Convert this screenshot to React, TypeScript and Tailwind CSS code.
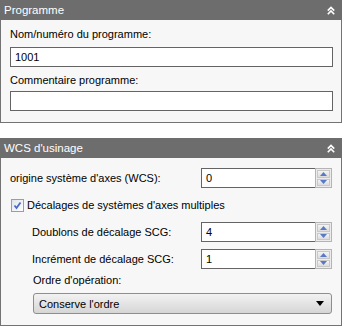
function Header({ title }: { title: string }) {
  return (
    <div className="h-[20px] bg-[#6d6d6d] flex items-center justify-between pl-[4px] pr-[7px] text-white text-[11.5px]">
      <span>{title}</span>
      <svg width="8" height="9" viewBox="0 0 8 9">
        <path d="M0.8 4.6 L4 1.4 L7.2 4.6 M0.8 8.2 L4 5 L7.2 8.2" stroke="white" strokeWidth="1.6" fill="none" />
      </svg>
    </div>
  );
}

function TextBox({ value, className = '' }: { value?: string; className?: string }) {
  return (
    <div className={`h-[20px] bg-white border border-[#646464] flex items-center pl-[4px] text-[11px] text-black ${className}`}>
      {value}
    </div>
  );
}

function Spinner() {
  return (
    <div className="w-[17px] h-[20px] border border-[#b4b4b4] bg-[#ececec] flex flex-col p-[1px] gap-[1px]">
      {[0, 1].map((i) => (
        <div key={i} className="flex-1 bg-gradient-to-b from-[#f4f4f4] to-[#dcdcdc] border border-[#c8c8c8] flex items-center justify-center">
          <svg width="7" height="4" viewBox="0 0 7 4">
            {i === 0 ? <path d="M0 4 L3.5 0 L7 4 Z" fill="#5a78c8" /> : <path d="M0 0 L3.5 4 L7 0 Z" fill="#5a78c8" />}
          </svg>
        </div>
      ))}
    </div>
  );
}

function SpinRow({ label, value, indent }: { label: string; value: string; indent?: boolean }) {
  return (
    <div className={`h-[20px] flex items-center justify-between ${indent ? 'pl-[22px]' : ''}`}>
      <span>{label}</span>
      <div className="flex">
        <TextBox value={value} className="w-[114px] border-r-0" />
        <Spinner />
      </div>
    </div>
  );
}

export default function App() {
  return (
    <div className="w-[342px] h-[327px] bg-white font-['Liberation_Sans',sans-serif] text-[11px] leading-[14px] text-black">
      <div>
        <Header title="Programme" />
        <div className="bg-[#f7f7f7] border border-t-0 border-[#737373] pl-[9px] pr-[8px] pt-[7px] pb-[11px]">
          <div className="h-[14px] mb-[6px]">Nom/numéro du programme:</div>
          <TextBox value="1001" />
          <div className="h-[14px] mt-[6px] mb-[4px]">Commentaire programme:</div>
          <TextBox />
        </div>
      </div>
      <div className="mt-[15px]">
        <Header title="WCS d'usinage" />
        <div className="bg-[#f7f7f7] border border-t-0 border-[#737373] pl-[9px] pr-[9px] pt-[10px] pb-[11px] flex flex-col">
          <SpinRow label="origine système d'axes (WCS):" value="0" />
          <div className="flex items-center gap-[3px] mt-[10px] ml-[1px] h-[14px]">
            <div className="w-[13px] h-[13px] border border-[#8f9fb4] bg-gradient-to-br from-[#dfe3ea] to-white flex items-center justify-center">
              <svg width="9" height="9" viewBox="0 0 9 9">
                <path d="M1.5 4.5 L3.5 7 L7.5 1.5" stroke="#4a6ac8" strokeWidth="1.8" fill="none" />
              </svg>
            </div>
            <span>Décalages de systèmes d'axes multiples</span>
          </div>
          <div className="mt-[10px] flex flex-col gap-[7px]">
            <SpinRow indent label="Doublons de décalage SCG:" value="4" />
            <SpinRow indent label="Incrément de décalage SCG:" value="1" />
          </div>
          <div className="pl-[23px] mt-[4px]">
            <div className="h-[14px] mb-[6px]">Ordre d'opération:</div>
            <div className="h-[21px] rounded-[3px] border border-[#8e8e8e] bg-gradient-to-b from-[#f2f2f2] to-[#d6d6d6] flex items-center justify-between pl-[5px] pr-[7px]">
              <span>Conserve l'ordre</span>
              <svg width="8" height="5" viewBox="0 0 8 5">
                <path d="M0 0 L8 0 L4 5 Z" fill="black" />
              </svg>
            </div>
          </div>
        </div>
      </div>
    </div>
  );
}
